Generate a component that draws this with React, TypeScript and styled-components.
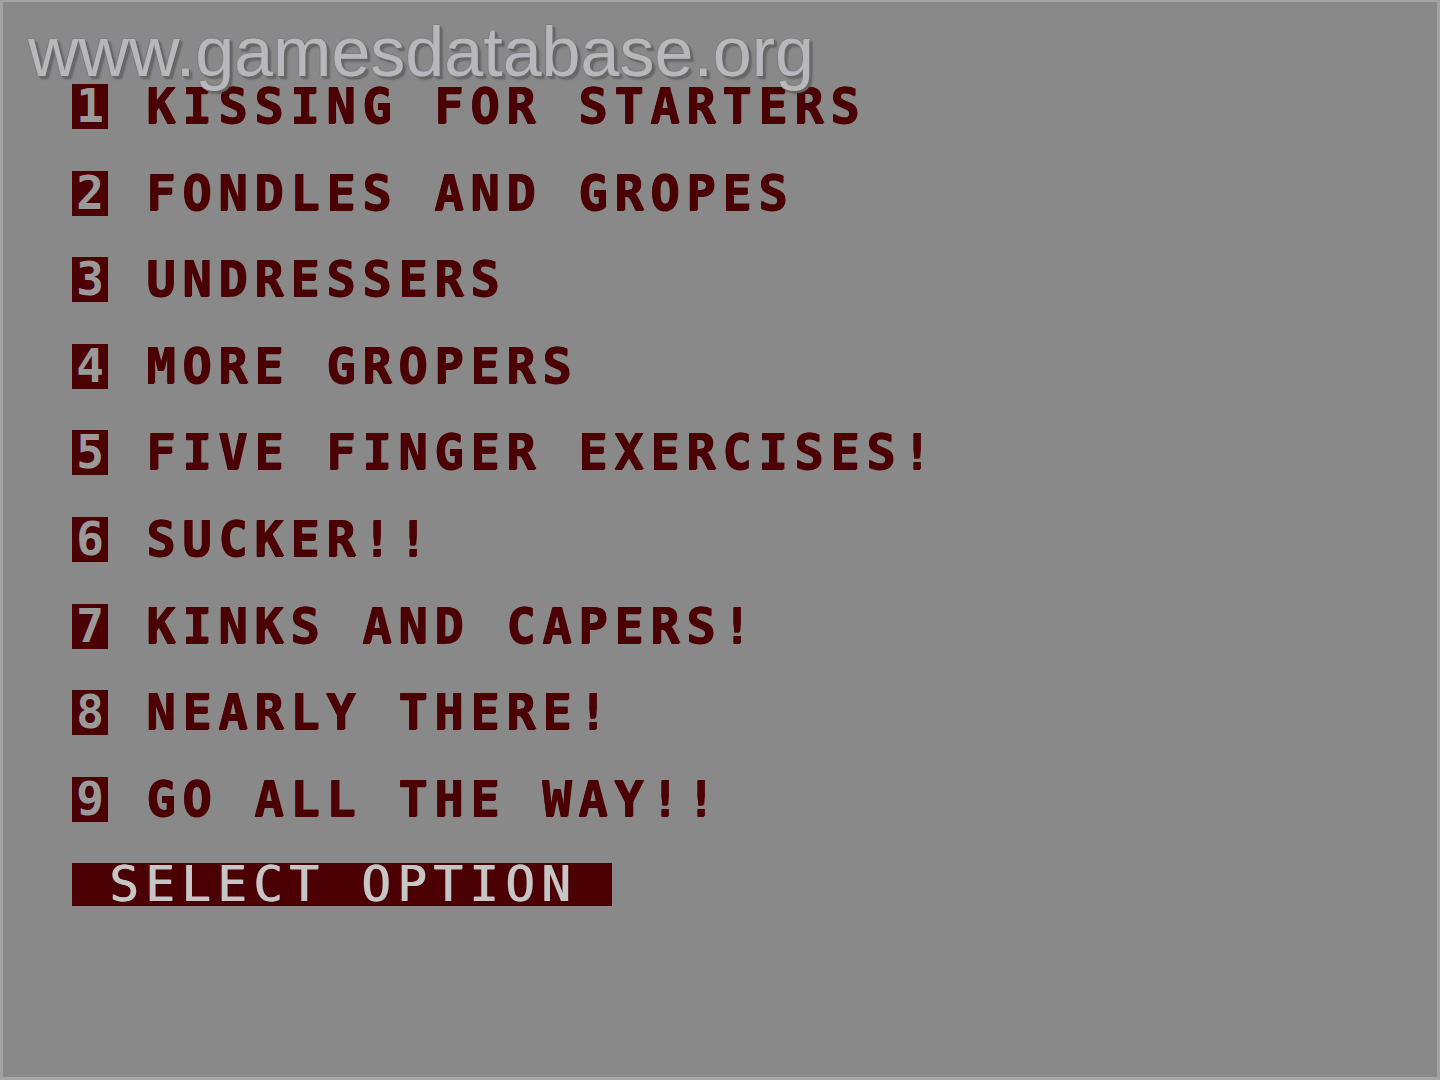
import styled, { createGlobalStyle } from 'styled-components'

const GlobalStyle = createGlobalStyle`
  html, body {
    margin: 0;
    padding: 0;
    background: #898989;
  }
`

const MAROON = '#4b0103'
const GREY = '#898989'
const CELL = 36

const options = [
  'KISSING FOR STARTERS',
  'FONDLES AND GROPES',
  'UNDRESSERS',
  'MORE GROPERS',
  'FIVE FINGER EXERCISES!',
  'SUCKER!!',
  'KINKS AND CAPERS!',
  'NEARLY THERE!',
  'GO ALL THE WAY!!',
]

const Screen = styled.div`
  position: relative;
  box-sizing: border-box;
  width: 1440px;
  height: 1080px;
  background: ${GREY};
  border-top: 2px solid #a6a6a6;
  border-left: 3px solid #a2a2a2;
  border-right: 3px solid #a2a2a2;
  border-bottom: 3px solid #a6a6a6;
  overflow: hidden;
`

const Menu = styled.div`
  display: flex;
  flex-direction: column;
  padding: 82px 0 0 69px;
`

const Row = styled.div`
  display: flex;
  align-items: flex-start;
  height: 86.6px;
`

const Glyphs = styled.span`
  display: block;
  height: 45px;
  font-family: 'DejaVu Sans Mono', 'Liberation Mono', monospace;
  font-weight: bold;
  font-size: 49px;
  line-height: 45px;
  letter-spacing: 6.5px;
  white-space: pre;
  color: ${MAROON};
  text-shadow: 1px 0 0 ${MAROON}, 0 1px 0 ${MAROON};
`

const NumberBox = styled(Glyphs)`
  width: ${CELL}px;
  letter-spacing: 0;
  text-align: center;
  background: ${MAROON};
  color: #9a9a9a;
  font-size: 46px;
  text-shadow: none;
`

const Label = styled(Glyphs)`
  margin-left: ${CELL + 2}px;
`

const SelectBar = styled(Glyphs)`
  align-self: flex-start;
  width: ${CELL * 15}px;
  height: 43px;
  line-height: 43px;
  padding-left: ${CELL + 1}px;
  box-sizing: border-box;
  background: ${MAROON};
  color: #c6c6c6;
  font-weight: normal;
  text-shadow: 1px 0 0 #c6c6c6;
`

const Watermark = styled.div`
  position: absolute;
  top: 15px;
  left: 25px;
  font-family: 'Liberation Sans', Arial, sans-serif;
  font-size: 70px;
  line-height: 70px;
  color: #b8b8bc;
  text-shadow:
    -1px 0 0 #7d7d80,
    0 -1px 0 #7d7d80,
    1px 1px 0 #666,
    2px 2px 0 #6a6a6a,
    3px 3px 2px rgba(60, 60, 60, 0.55);
  white-space: nowrap;
`

export default function App() {
  return (
    <>
      <GlobalStyle />
      <Screen>
        <Menu>
          {options.map((label, i) => (
            <Row key={label}>
              <NumberBox>{i + 1}</NumberBox>
              <Label>{label}</Label>
            </Row>
          ))}
          <SelectBar>SELECT OPTION</SelectBar>
        </Menu>
        <Watermark>www.gamesdatabase.org</Watermark>
      </Screen>
    </>
  )
}
